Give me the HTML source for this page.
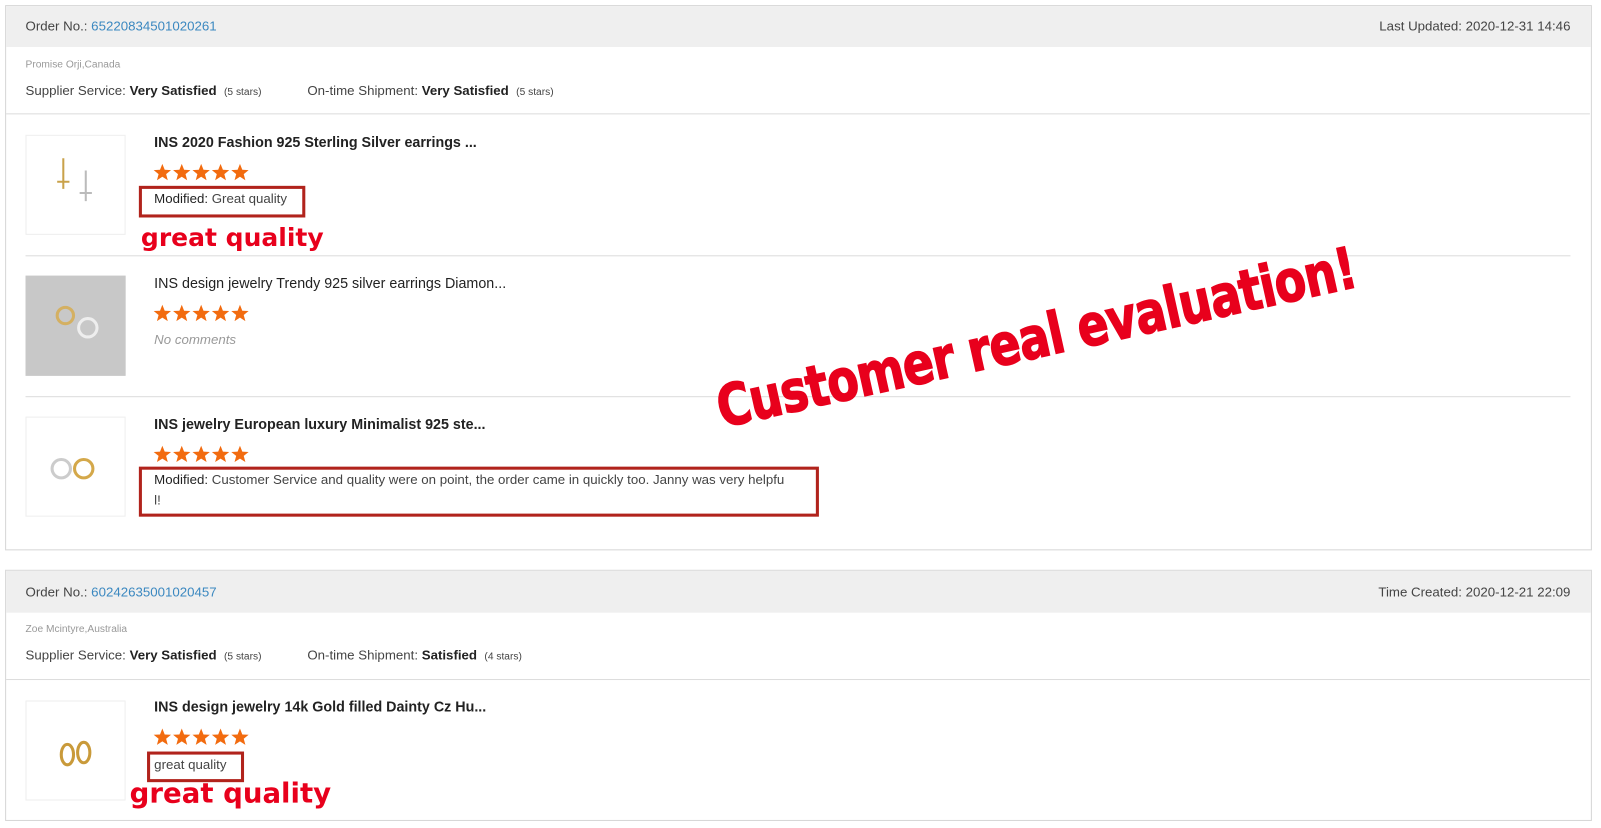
<!DOCTYPE html>
<html><head><meta charset="utf-8"><style>
body{margin:0;background:#fff;width:1601px;height:828px;overflow:hidden;font-family:"Liberation Sans",Arial,sans-serif;color:#333}
#w{position:absolute;left:0;top:0;width:1568px;height:811px;transform:scale(1.0211);transform-origin:0 0}
.a{position:absolute;white-space:nowrap}
.card{position:absolute;left:5px;width:1552px;border:1px solid #d6d6d6;background:#fff}
.hd{position:absolute;left:0;top:0;right:0;background:#efefef}
.line{position:absolute;height:1px;background:#dcdcdc}
.img{position:absolute;left:25px;width:96px;height:96px;border:1px solid #eee;background:#fff}
.t{font-size:14px;font-weight:bold;color:#222}
.box{position:absolute;border:3px solid #b1231c}
.gq{position:absolute;color:#e8001c;font-weight:bold;font-family:"DejaVu Sans","Liberation Sans",sans-serif;white-space:nowrap}
.s{font-size:13px;color:#444}
</style></head><body><div id="w">
<svg width="0" height="0" style="position:absolute"><defs><polygon id="st" points="9,0.5 11.3,6.3 17.5,6.6 12.7,10.5 14.3,16.5 9,13.1 3.7,16.5 5.3,10.5 0.5,6.6 6.7,6.3" fill="#f26b0f"/></defs></svg>

<div class="card" style="top:5px;height:532px">
 <div class="hd" style="height:40px"></div>
</div>
<div class="a s" style="left:25px;top:18px">Order No.: <span style="color:#3b88c0">65220834501020261</span></div>
<div class="a s" style="right:30px;top:18px">Last Updated: 2020-12-31 14:46</div>
<div class="a" style="left:25px;top:58px;font-size:10px;color:#999">Promise Orji,Canada</div>
<div class="a s" style="left:25px;top:81px">Supplier Service: <b style="color:#222">Very Satisfied</b> &nbsp;<span style="font-size:10px">(5 stars)</span></div>
<div class="a s" style="left:301px;top:81px">On-time Shipment: <b style="color:#222">Very Satisfied</b> &nbsp;<span style="font-size:10px">(5 stars)</span></div>
<div class="line" style="left:6px;width:1551px;top:111px"></div>

<div class="img" style="top:132px"><svg width="96" height="96"><g stroke="#c9a24a" stroke-width="2" fill="none"><path d="M36 22v30M30 45h12"/></g><g stroke="#bbb" stroke-width="2" fill="none"><path d="M58 34v30M52 56h12"/></g></svg></div>
<div class="a t" style="left:151px;top:131px">INS 2020 Fashion 925 Sterling Silver earrings ...</div>
<svg class="a" style="left:150px;top:160px" width="100" height="18"><use href="#st"/><use href="#st" x="19"/><use href="#st" x="38"/><use href="#st" x="57"/><use href="#st" x="76"/></svg>
<div class="box" style="left:136px;top:182px;width:157px;height:25px"></div>
<div class="a s" style="left:151px;top:187px"><span style="color:#222">Modified:</span> Great quality</div>
<div class="gq" style="left:138px;top:218px;font-size:24.5px">great quality</div>
<div class="line" style="left:25px;width:1513px;top:250px"></div>

<div class="img" style="top:270px;background:#c8c8c8;border-color:#c8c8c8"><svg width="96" height="96"><circle cx="38" cy="38" r="8" fill="none" stroke="#d4b062" stroke-width="3"/><circle cx="60" cy="50" r="9" fill="none" stroke="#eee" stroke-width="3"/></svg></div>
<div class="a t" style="left:151px;top:269px;font-weight:normal">INS design jewelry Trendy 925 silver earrings Diamon...</div>
<svg class="a" style="left:150px;top:298px" width="100" height="18"><use href="#st"/><use href="#st" x="19"/><use href="#st" x="38"/><use href="#st" x="57"/><use href="#st" x="76"/></svg>
<div class="a" style="left:151px;top:325px;font-size:13px;font-style:italic;color:#999">No comments</div>
<div class="line" style="left:25px;width:1513px;top:388px"></div>

<div class="img" style="top:408px"><svg width="96" height="96"><circle cx="34" cy="50" r="9" fill="none" stroke="#ccc" stroke-width="3"/><circle cx="56" cy="50" r="9" fill="none" stroke="#d4a84a" stroke-width="3"/></svg></div>
<div class="a t" style="left:151px;top:407px">INS jewelry European luxury Minimalist 925 ste...</div>
<svg class="a" style="left:150px;top:436px" width="100" height="18"><use href="#st"/><use href="#st" x="19"/><use href="#st" x="38"/><use href="#st" x="57"/><use href="#st" x="76"/></svg>
<div class="box" style="left:136px;top:457px;width:660px;height:43px"></div>
<div class="a s" style="left:151px;top:462px"><span style="color:#222">Modified:</span> Customer Service and quality were on point, the order came in quickly too. Janny was very helpfu</div>
<div class="a s" style="left:151px;top:482px">l!</div>

<div class="a" style="left:1015px;top:335px;width:0;height:0"><div class="gq" style="position:absolute;left:-400px;top:-36px;width:800px;text-align:center;font-size:56px;font-weight:900;-webkit-text-stroke:1.5px #e8001c;transform:rotate(-12.5deg) scaleX(0.8);letter-spacing:-1px">Customer real evaluation!</div></div>

<div class="card" style="top:558px;height:244px">
 <div class="hd" style="height:41px"></div>
</div>
<div class="a s" style="left:25px;top:572px">Order No.: <span style="color:#3b88c0">60242635001020457</span></div>
<div class="a s" style="right:30px;top:572px">Time Created: 2020-12-21 22:09</div>
<div class="a" style="left:25px;top:611px;font-size:10px;color:#999">Zoe Mcintyre,Australia</div>
<div class="a s" style="left:25px;top:634px">Supplier Service: <b style="color:#222">Very Satisfied</b> &nbsp;<span style="font-size:10px">(5 stars)</span></div>
<div class="a s" style="left:301px;top:634px">On-time Shipment: <b style="color:#222">Satisfied</b> &nbsp;<span style="font-size:10px">(4 stars)</span></div>
<div class="line" style="left:6px;width:1551px;top:665px"></div>

<div class="img" style="top:686px"><svg width="96" height="96"><ellipse cx="40" cy="52" rx="6" ry="10" fill="none" stroke="#c99a3a" stroke-width="3"/><ellipse cx="56" cy="50" rx="6" ry="10" fill="none" stroke="#c99a3a" stroke-width="3"/></svg></div>
<div class="a t" style="left:151px;top:684px">INS design jewelry 14k Gold filled Dainty Cz Hu...</div>
<svg class="a" style="left:150px;top:713px" width="100" height="18"><use href="#st"/><use href="#st" x="19"/><use href="#st" x="38"/><use href="#st" x="57"/><use href="#st" x="76"/></svg>
<div class="box" style="left:144px;top:736px;width:89px;height:24px"></div>
<div class="a s" style="left:151px;top:741px">great quality</div>
<div class="gq" style="left:127px;top:762px;font-size:27px">great quality</div>
</div></body></html>
